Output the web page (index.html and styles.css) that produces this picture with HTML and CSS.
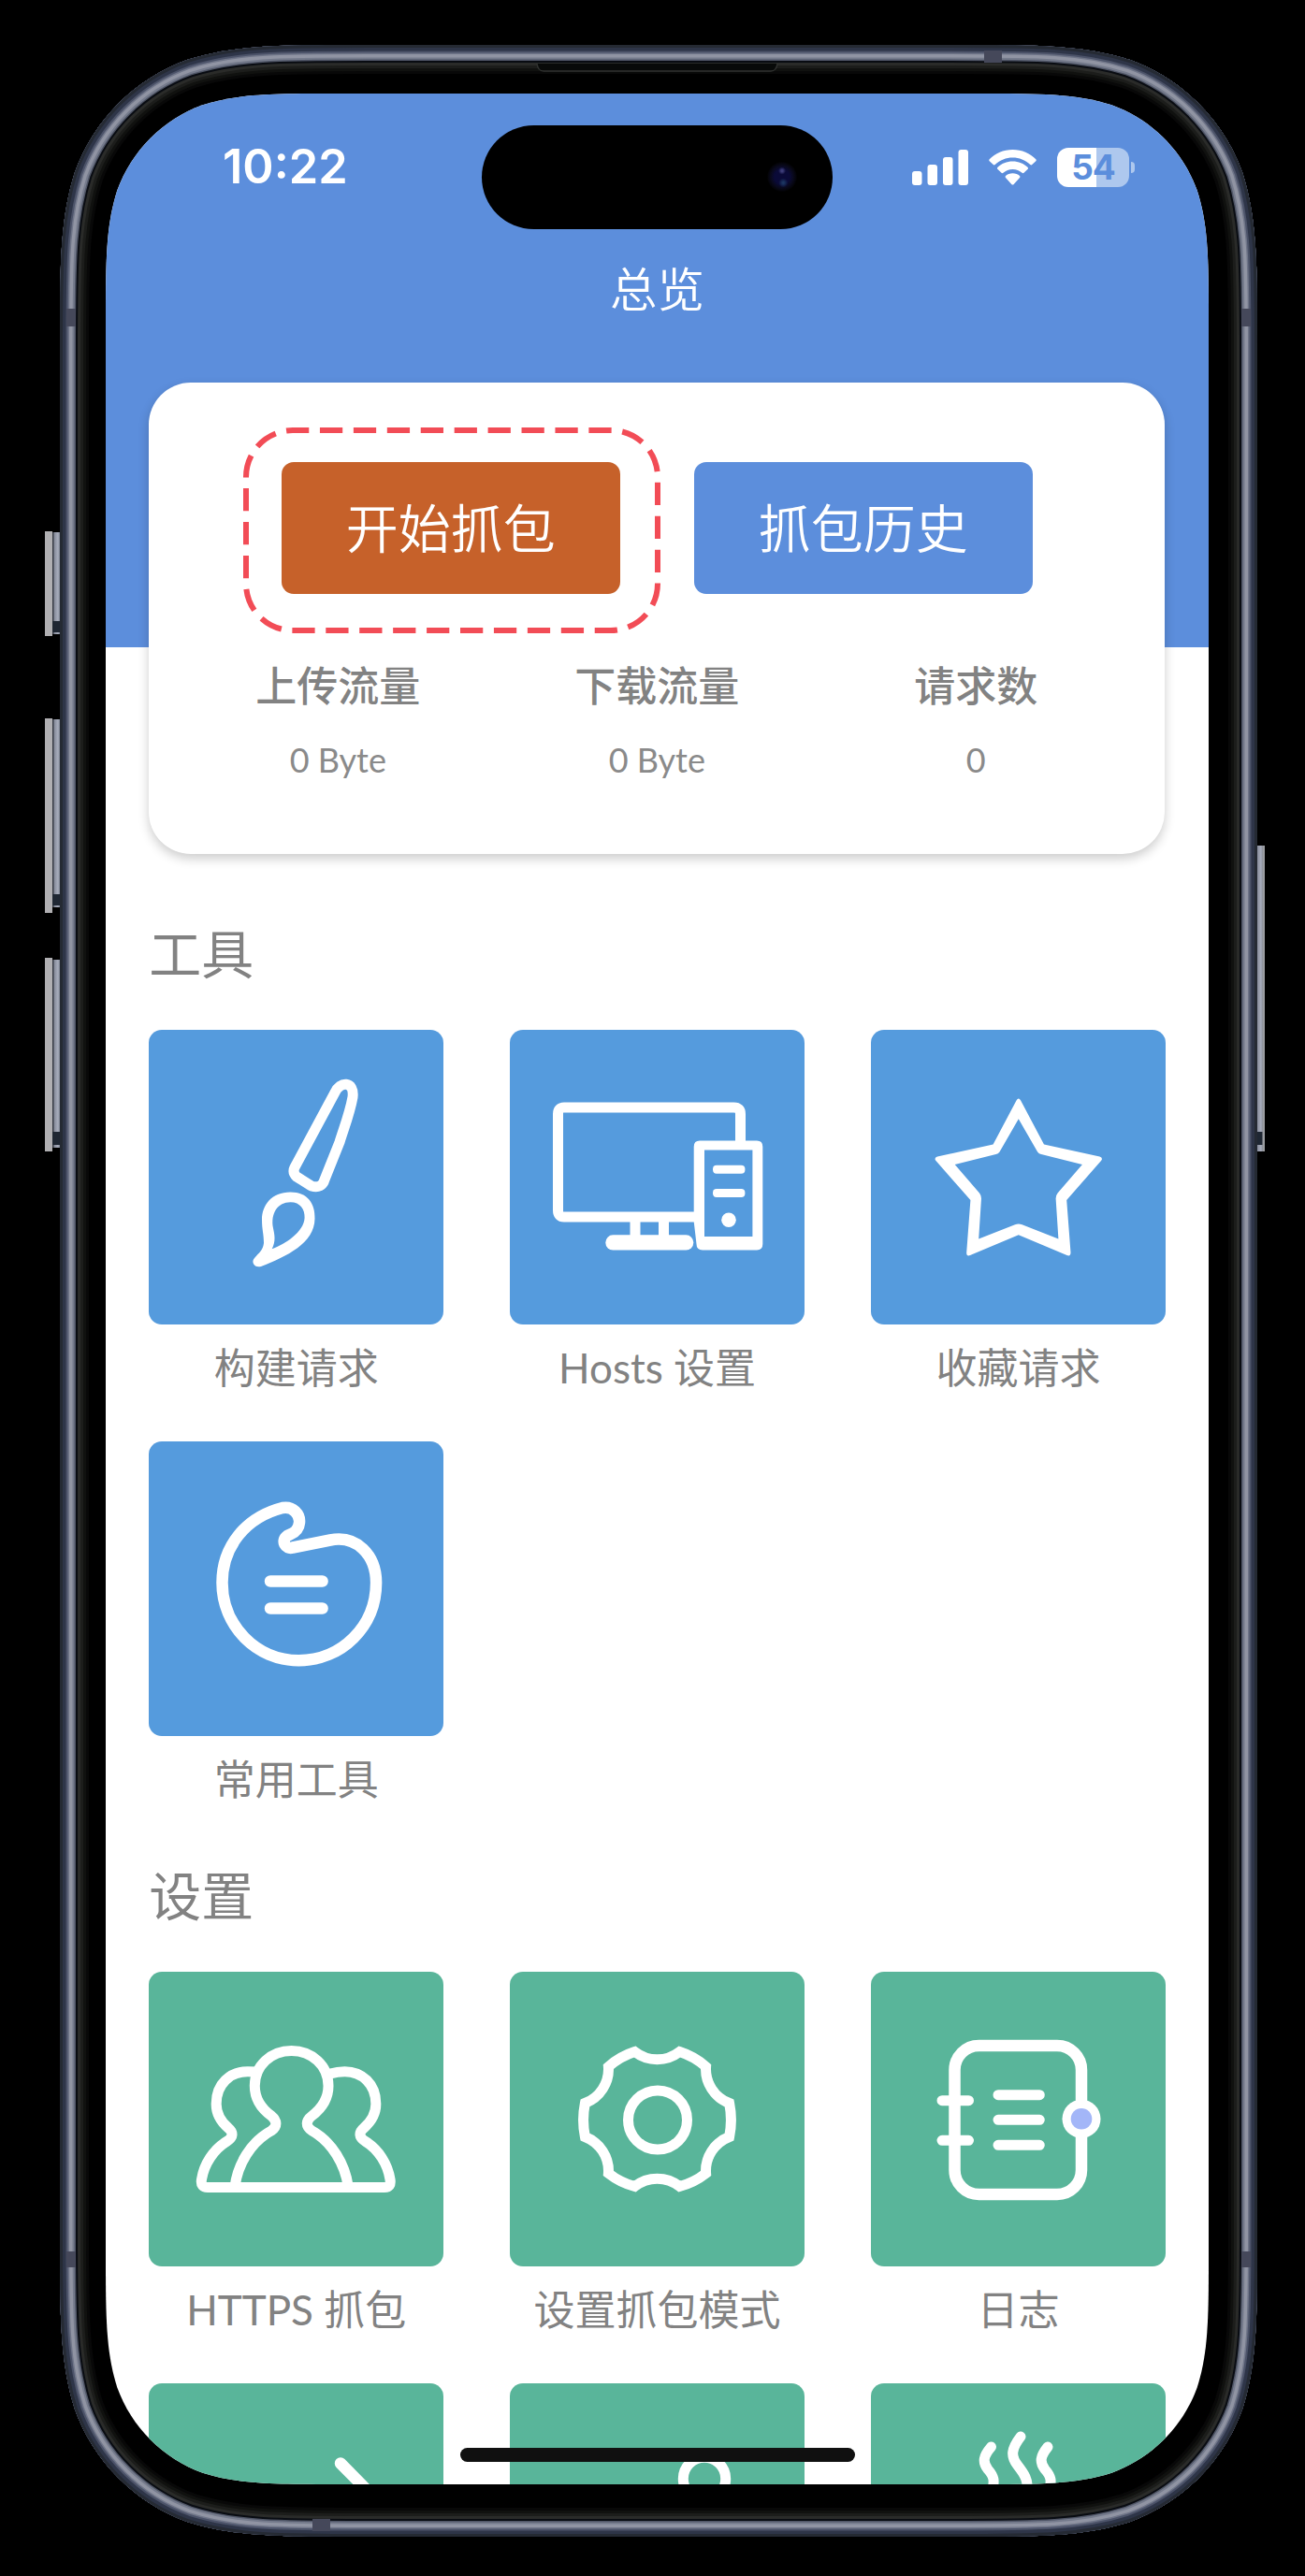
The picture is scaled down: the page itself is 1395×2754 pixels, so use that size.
FILE: index.html
```html
<!DOCTYPE html>
<html lang="zh-CN">
<head>
<meta charset="utf-8">
<title>总览</title>
<link rel="stylesheet" href="styles.css">
</head>
<body>
<div class="stage">
  <svg class="frame" viewBox="0 0 1395 2754" aria-hidden="true">
    <defs>
      <path id="shell" d="M392.700 48H1015.300C1110 48 1157.300 48 1208.200 64.100C1263.800 84.300 1307.700 128.200 1327.900 183.800C1344 234.700 1344 282 1344 376.700V2383.300C1344 2478 1344 2525.300 1327.900 2576.200C1307.700 2631.800 1263.800 2675.700 1208.200 2695.900C1157.300 2712 1110 2712 1015.300 2712H392.700C298 2712 250.700 2712 199.800 2695.900C144.200 2675.700 100.300 2631.800 80.100 2576.200C64 2525.300 64 2478 64 2383.300V376.700C64 282 64 234.700 80.100 183.800C100.300 128.200 144.200 84.300 199.800 64.100C250.700 48 298 48 392.700 48Z"/>
      <clipPath id="shell-clip"><use href="#shell"/></clipPath>
      <linearGradient id="key" x1="0" x2="1" y1="0" y2="0">
        <stop offset="0" stop-color="#20242c"/><stop offset=".25" stop-color="#8a8f9e"/><stop offset=".6" stop-color="#a9aebd"/><stop offset="1" stop-color="#4a5260"/>
      </linearGradient>
    </defs>
    <path d="M48 568h8v112h-8zM48 768h8v208h-8zM48 1024h8v207h-8z" fill="#b0afb2"/>
    <g fill="url(#key)">
      <rect x="56" y="569" width="10" height="109"/>
      <rect x="56" y="769" width="10" height="201"/>
      <rect x="56" y="1026" width="10" height="201"/>
      <rect x="1342" y="904" width="10" height="327"/>
    </g>
    <path d="M56 664h8v12h-8zM56 956h8v12h-8zM56 1210h8v14h-8zM1344 1210h6v14h-6z" fill="#1f2733"/>
    <path d="M1349.500 904h2.500v327h-2.500z" fill="#9b9da1"/>
    <g clip-path="url(#shell-clip)" fill="none">
      <use href="#shell" fill="#000"/>
      <use href="#shell" stroke="#080808" stroke-width="62"/>
      <use href="#shell" stroke="#10110f" stroke-width="56"/>
      <use href="#shell" stroke="#1c1d1b" stroke-width="50"/>
      <use href="#shell" stroke="#2a2b29" stroke-width="44"/>
      <use href="#shell" stroke="#090c12" stroke-width="38"/>
      <use href="#shell" stroke="#4f5566" stroke-width="34"/>
      <use href="#shell" stroke="#757b8c" stroke-width="31"/>
      <use href="#shell" stroke="#9094a3" stroke-width="27"/>
      <use href="#shell" stroke="#6f7588" stroke-width="20"/>
      <use href="#shell" stroke="#4c5369" stroke-width="17"/>
      <use href="#shell" stroke="#2e3548" stroke-width="13"/>
      <use href="#shell" stroke="#252a33" stroke-width="6"/>
      <path d="M1052 54h19v13h-19zM71 330h10v19h-10zM1327 330h10v19h-10zM71 2407h10v17h-10zM1327 2407h10v17h-10zM334 2693h19v13h-19z" fill="#45485a"/>
      <path d="M574 68q1 8 7 8H824q6 0 7-8" fill="#080a09" stroke="#303230" stroke-width="1.500"/>
    </g>
  </svg>

  <main class="screen">
    <header class="header">
      <div class="status">
        <span class="clock">10:22</span>
        <span class="indicators">
          <svg class="signal" viewBox="0 0 60 38"><rect y="23" width="10.500" height="15" rx="3"/><rect x="16.500" y="16" width="10.500" height="22" rx="3"/><rect x="33" y="8" width="10.500" height="30" rx="3"/><rect x="49.500" width="10.500" height="38" rx="3"/></svg>
          <svg class="wifi" viewBox="0 0 51 38"><path d="M25.500 0C35.500 0 44 4 50.300 10.200Q51.200 11.200 50.300 12.200L46.200 16Q45.400 16.800 44.300 15.900C39 11 32.600 8.400 25.500 8.400S12 11 6.700 15.900Q5.600 16.800 4.800 16L.7 12.200Q-.2 11.200.7 10.200C7 4 15.500 0 25.500 0Z"/><path d="M25.500 12.600C31.800 12.600 37.300 15 41.700 19Q42.600 19.900 41.700 20.800L37.500 24.800Q36.600 25.600 35.600 24.800C32.700 22.300 29.500 21 25.500 21S18.300 22.300 15.400 24.800Q14.400 25.600 13.500 24.800L9.300 20.800Q8.400 19.900 9.300 19C13.700 15 19.200 12.600 25.500 12.600Z"/><path d="M25.500 25.200C28.500 25.200 31 26.200 33 28Q34 29 33 30L26.700 37Q25.500 38 24.300 37L18 30Q17 29 18 28C20 26.200 22.500 25.200 25.500 25.200Z"/></svg>
          <span class="battery"><b>54</b></span>
        </span>
      </div>
      <div class="island"><i class="lens"></i></div>
      <h1 class="title">总览</h1>
    </header>

    <section class="card">
      <div class="actions">
        <button class="btn btn-start">开始抓包
          <svg class="marker" viewBox="0 0 446 220"><rect x="3" y="3" width="440" height="214" rx="50" pathLength="1224"/></svg>
        </button>
        <button class="btn btn-history">抓包历史</button>
      </div>
      <dl class="stats">
        <div><dt>上传流量</dt><dd>0 Byte</dd></div>
        <div><dt>下载流量</dt><dd>0 Byte</dd></div>
        <div><dt>请求数</dt><dd>0</dd></div>
      </dl>
    </section>

    <section class="group">
      <h2>工具</h2>
      <div class="grid">
        <a class="item"><span class="tile"><svg viewBox="0 0 315 315">
          <path class="line" d="M199 67C204 55 220 54 218 72C215 89 209 104 204 120L188 160C186 167 181 169 174 167C167 163 163 160 158 157C155 154 154 151 156 147Z"/>
          <path class="solid" d="M151.500 173.600C170 173.600 178 186 177.500 202C177 228 148 242 120 253C113 255 109 248 113 244C118 238 122 236 123 228C123 218 121 214 121 203C121 188 131 173.600 151.500 173.600ZM151.500 184.300C162 184.300 167 192 166.600 201C166 216 146 229 131.700 234.300C136 226 134.500 219 133 212C130 196 138 184.300 151.500 184.300Z"/>
        </svg></span><span class="label">构建请求</span></a>
        <a class="item"><span class="tile"><svg viewBox="0 0 315 315">
          <path class="line" d="M246.500 120V90Q246.500 83 239.500 83H58Q51.500 83 51.500 90V193Q51.500 200 58 200H199M134 200V224M164.500 200V224"/>
          <rect class="solid" x="102.300" y="219.300" width="94" height="16.200" rx="8"/>
          <path class="solid" d="M203 118.600H264Q270.300 118.600 270.300 125V229Q270.300 235.400 264 235.400H206Q199.500 235.400 199.500 229L196.700 205V125Q196.700 118.600 203 118.600ZM208 128.500V221H259.400V128.500Z"/>
          <rect class="solid" x="217" y="144.700" width="34.400" height="9" rx="4"/><rect class="solid" x="217" y="170" width="34.400" height="9" rx="4"/><circle class="solid" cx="234" cy="203.200" r="7.800"/>
        </svg></span><span class="label">Hosts 设置</span></a>
        <a class="item"><span class="tile"><svg viewBox="0 0 315 315">
          <path class="solid" d="M155.500 75.500Q157.800 71.500 160.100 75.500L185 122.600L244.500 135.500Q248.500 137 246 140L209.200 182L213.500 238Q213.500 242.500 209.500 241L157.800 219.300L106 241Q102 242.500 102.200 238L106.400 182L69.500 140Q67 137 71 135.500L130.600 122.600ZM157.800 95.300L137.500 130.500Q136 132.500 133.600 133L89.700 144L116 174.500Q118 177 118 180.300L115.200 223.600L154 208.300Q157.800 206.500 161.600 208.300L200.400 223.600L197.600 180.300Q197.600 177 199.600 174.500L225.900 144L182 133Q179.600 132.500 178.100 130.500Z"/>
        </svg></span><span class="label">收藏请求</span></a>
        <a class="item"><span class="tile"><svg viewBox="0 0 315 315">
          <path class="line thick" d="M154 113.500L194 105.500C222 100 243 121 243.100 151C243 198 206 234.200 160.400 234.200C115 234.200 78.500 197 78.500 151C78.500 112 104 81 143 71C154 69 162 78 161 87C160 98 151 99 148 101C141 106 146 116 154 113.500Z"/>
          <path class="line thick" d="M130 149.500H185.600M130 178.500H185.600"/>
        </svg></span><span class="label">常用工具</span></a>
      </div>
    </section>

    <section class="group settings">
      <h2>设置</h2>
      <div class="grid">
        <a class="item"><span class="tile"><svg viewBox="0 0 315 315">
          <path class="line" d="M92 230C95 206 109 182 131 170C138 165 137 159 131 154C120 146 113.300 136 113.300 122C113.300 100 131 84.500 152.600 84.500C174 84.500 192 100 192 122C192 136 185 146 174.500 154C168 159 167 165 174.500 170C196 182 210 206 213.300 230"/>
          <path class="line" d="M116 107C112 106.700 109 106.700 105.700 106.700C87 106.700 72.200 120 72.200 141C72 152 77 160 85 167C91 172 90 177 84 181C69 190 59 206 56.500 222C55.500 228 58 230.500 63 230.500H252C257 230.500 259 228 258 222C255.500 206 246 190 231 181C225 177 224 172 230 167C238 160 243 152 242.800 141C242.800 120 228 106.700 209.500 106.700C204 106.700 199 107.500 194 109"/>
        </svg></span><span class="label">HTTPS 抓包</span></a>
        <a class="item"><span class="tile"><svg viewBox="0 0 315 315">
          <path class="line miter" d="M133.500 85.500A39 39 0 0 0 181.500 85.500A77 77 0 0 1 209.600 101.500A39 39 0 0 0 234.600 140.500A90 90 0 0 1 234.600 176.500A39 39 0 0 0 209.600 215.500A77 77 0 0 1 181.500 229.500A39 39 0 0 0 133.500 229.500A77 77 0 0 1 105.400 215.500A39 39 0 0 0 80.400 176.500A90 90 0 0 1 80.400 140.500A39 39 0 0 0 105.400 101.500A77 77 0 0 1 133.500 85.500Z"/>
          <circle class="line" cx="158" cy="158.500" r="31.500"/>
        </svg></span><span class="label">设置抓包模式</span></a>
        <a class="item"><span class="tile"><svg viewBox="0 0 315 315">
          <rect class="line thick" x="89.500" y="79" width="135.500" height="159" rx="26"/>
          <path class="line" d="M136 131.700H180.300M136 158.300H180.300M136 185.300H180.300M76 137.700H104.500M76 180.300H104.500"/>
          <circle class="solid" cx="225" cy="157.300" r="20.500"/><circle cx="225" cy="157.300" r="11.300" fill="#a3b6f8"/>
        </svg></span><span class="label">日志</span></a>
        <a class="item"><span class="tile"><svg viewBox="0 0 315 315"><path class="line thick" d="M205 85.500L240 121"/></svg></span></a>
        <a class="item"><span class="tile"><svg viewBox="0 0 315 315"><circle class="line" cx="208" cy="102" r="22.700"/></svg></span></a>
        <a class="item"><span class="tile"><svg viewBox="0 0 315 315"><path class="line" d="M128.500 68C120 78 119 84 125 92C132 100 132 104 130 114M160 57C150 70 149 78 157 88C164 97 168 103 167 114M189 68C181 78 180 84 186 92C193 100 193 104 191 114"/></svg></span></a>
      </div>
    </section>
    <div class="home-bar"></div>
  </main>
</div>
</body>
</html>
```
FILE: styles.css
```css
* { box-sizing: border-box; }
body { margin: 0; background: #000; }

.stage {
  position: relative;
  width: 1395px;
  height: 2754px;
  padding: 100px 103px 98px 113px;
  overflow: hidden;
  background: #000;
}
.frame { position: absolute; inset: 0; width: 1395px; height: 2754px; }

.screen {
  position: relative;
  width: 1179px;
  height: 2556px;
  overflow: hidden;
  background: #fff;
  color: #828282;
  font-family: Lato, "Noto Sans CJK SC", sans-serif;
  clip-path: path("M251 0H928C1000.500 0 1036.600 0 1075.400 12.300C1117.900 27.700 1151.300 61.100 1166.700 103.600C1179 142.400 1179 178.500 1179 251V2305C1179 2377.500 1179 2413.600 1166.700 2452.400C1151.300 2494.900 1117.900 2528.300 1075.400 2543.700C1036.600 2556 1000.500 2556 928 2556H251C178.500 2556 142.400 2556 103.600 2543.700C61.100 2528.300 27.700 2494.900 12.300 2452.400C0 2413.600 0 2377.500 0 2305V251C0 178.500 0 142.400 12.300 103.600C27.700 61.100 61.100 27.700 103.600 12.300C142.400 0 178.500 0 251 0Z");
}

.header { height: 592px; background: #5c8edc; color: #fff; }
.status {
  display: flex;
  align-items: center;
  justify-content: space-between;
  height: 157px;
  padding: 0 85px 0 125px;
}
.clock { font: 600 50.500px/1 Inter, sans-serif; }
.indicators { display: flex; align-items: center; gap: 22px; }
.indicators svg { fill: #fff; height: 38px; }
.signal { width: 60px; }
.wifi { width: 51px; }
.battery {
  position: relative;
  width: 77px;
  height: 42px;
  border-radius: 12px;
  background: linear-gradient(90deg, #fff 42px, #aec8ee 42px);
  color: #5c8edc;
  font: 700 37px/42px Inter, sans-serif;
  letter-spacing: -1px;
  text-align: center;
}
.battery b { font-weight: 700; }
.battery::after {
  content: "";
  position: absolute;
  left: 79px;
  top: 15px;
  width: 4px;
  height: 12px;
  border-radius: 0 4px 4px 0;
  background: #aec8ee;
}
.island {
  position: absolute;
  left: 402px;
  top: 34px;
  width: 375px;
  height: 111px;
  border-radius: 56px;
  background: #000;
}
.lens {
  position: absolute;
  left: 305px;
  top: 39px;
  width: 32px;
  height: 32px;
  border-radius: 50%;
  background: radial-gradient(circle at 50% 30%, #3c3c78 0 1px, transparent 4px), radial-gradient(circle at 54% 70%, #1b3560 0 1px, transparent 5px), radial-gradient(circle, #0a0a38 0 8px, #09091c 12px, #020203 16px);
}
.title {
  margin: 0;
  font-size: 50.500px;
  font-weight: 350;
  line-height: 104px;
  text-align: center;
}

.card {
  position: relative;
  width: 1086px;
  height: 504px;
  margin: -283.400px 0 0 46.300px;
  padding: 85px 31px 0;
  border-radius: 45px;
  background: #fff;
  box-shadow: 0 5px 12px rgba(0, 0, 0, .2);
}
.actions { display: flex; justify-content: center; gap: 79px; }
.btn {
  position: relative;
  width: 362px;
  height: 141px;
  padding: 0 0 5px;
  border: 0;
  border-radius: 13px;
  color: #fff;
  font: 350 56px/1 "Noto Sans CJK SC", sans-serif;
}
.btn-start { background: #c6612a; }
.btn-history { background: #5c8edc; }
.marker {
  position: absolute;
  left: -40.500px;
  top: -37px;
  width: 446px;
  height: 220px;
  fill: none;
  stroke: #f24c56;
  stroke-width: 6;
  stroke-dasharray: 24.300 11.700;
  stroke-dashoffset: 7;
}
.stats {
  display: grid;
  grid-template-columns: repeat(3, 341px);
  justify-content: center;
  margin: 70px 0 0;
  text-align: center;
}
.stats dt { font-size: 44px; font-weight: 500; line-height: 56px; }
.stats dd { margin: 26px 0 0; font-size: 36px; line-height: 50px; color: #8a8a8a; }

.group { padding: 72.500px 46px 0 46.200px; }
.group h2 {
  margin: 0 0 45.900px;
  font-size: 56px;
  font-weight: 400;
  line-height: 70px;
}
.grid {
  display: grid;
  grid-template-columns: repeat(3, 315px);
  column-gap: 70.900px;
  row-gap: 49px;
}
.item { display: flex; flex-direction: column; gap: 16px; text-align: center; }
.tile { height: 315px; border-radius: 14px; background: #559bdd; }
.tile svg { display: block; width: 315px; height: 315px; }
.label { font-size: 44px; line-height: 60px; white-space: nowrap; }
.settings { padding-top: 60.100px; }
.settings .tile { background: #59b59a; }

.line { fill: none; stroke: #fff; stroke-width: 11; stroke-linecap: round; stroke-linejoin: round; }
.thick { stroke-width: 12.500; }
.miter { stroke-linejoin: miter; }
.solid { fill: #fff; fill-rule: evenodd; }

.home-bar {
  position: absolute;
  left: 379px;
  top: 2517px;
  width: 422px;
  height: 15px;
  border-radius: 8px;
  background: #101010;
}
```
